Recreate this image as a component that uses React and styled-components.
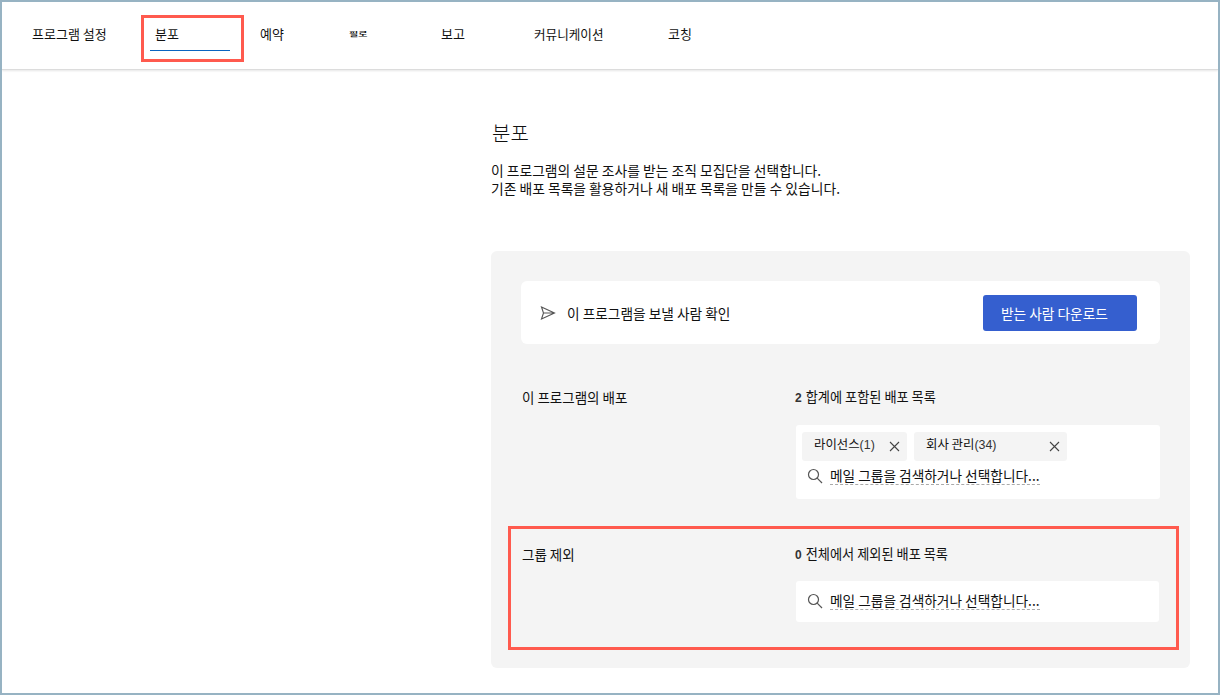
import React from "react";
import styled, { createGlobalStyle } from "styled-components";

const GlobalStyle = createGlobalStyle`
  html, body {
    margin: 0;
    padding: 0;
    background: #fff;
  }
  body {
    font-family: "Noto Sans CJK KR", "Liberation Sans", sans-serif;
    color: #111;
  }
`;

const Frame = styled.div`
  box-sizing: border-box;
  width: 1220px;
  height: 695px;
  border: 2px solid #97b3c3;
  overflow: hidden;
  background: #fff;
`;

const Nav = styled.nav`
  display: flex;
  align-items: flex-start;
  box-sizing: border-box;
  height: 68px;
  padding: 13px 0 0 30px;
  border-bottom: 1px solid #dcdcdc;
  box-shadow: 0 1px 2px rgba(0, 0, 0, 0.1);
`;

const NavText = styled.div`
  flex: none;
  width: ${(p) => (p.$width ? `${p.$width}px` : "auto")};
  height: 24px;
  margin-top: 7px;
  line-height: 24px;
  font-size: ${(p) => p.$size || 13}px;
  white-space: nowrap;
`;

const SmallNavText = styled(NavText)`
  font-size: 10px;
  font-weight: 700;
  span {
    display: inline-block;
    transform: scaleY(0.55);
  }
`;

const ActiveTab = styled.div`
  box-sizing: border-box;
  flex: none;
  width: 103px;
  height: 47px;
  margin-right: 16px;
  padding: 8px 11px 0 6px;
  border: 3px solid #ff5a4e;
`;

const ActiveLabel = styled.div`
  box-sizing: border-box;
  height: 25px;
  line-height: 16px;
  padding-left: 5px;
  font-size: 13px;
  border-bottom: 1px solid #0a64c0;
`;

const Main = styled.main`
  box-sizing: border-box;
  width: 699px;
  margin-left: 489px;
  padding-top: 49px;
`;

const Title = styled.h1`
  margin: 0 0 14px 1px;
  font-size: 20px;
  font-weight: 300;
  line-height: 28px;
`;

const Description = styled.p`
  margin: 0 0 54px;
  font-size: 13.8px;
  line-height: 18px;
`;

const Panel = styled.section`
  box-sizing: border-box;
  height: 417px;
  padding: 30px 30px 0;
  background: #f4f4f4;
  border-radius: 6px;
`;

const ConfirmCard = styled.div`
  display: flex;
  align-items: center;
  justify-content: space-between;
  box-sizing: border-box;
  height: 63px;
  padding: 0 23px 0 19px;
  background: #fff;
  border-radius: 6px;
  font-size: 13.7px;
`;

const ConfirmText = styled.div`
  display: flex;
  align-items: center;
  gap: 11px;
`;

const PrimaryButton = styled.button`
  box-sizing: border-box;
  width: 154px;
  height: 36px;
  padding: 0 0 0 18px;
  border: 0;
  border-radius: 3px;
  background: #355fcf;
  color: #fff;
  font-family: inherit;
  font-size: 13.7px;
  text-align: left;
`;

const Row = styled.div`
  display: grid;
  grid-template-columns: 274px 1fr;
  padding-top: 43px;
`;

const ExcludeRow = styled.div`
  display: grid;
  grid-template-columns: 274px 1fr;
  box-sizing: border-box;
  width: 671px;
  height: 124px;
  margin: 27px 0 0 -13px;
  padding: 15px 17px 0 10px;
  border: 3px solid #ff5a4e;
`;

const RowLabel = styled.div`
  padding-left: 1px;
  font-size: 13.5px;
  line-height: 20px;
`;

const CountLine = styled.div`
  margin-bottom: ${(p) => p.$gap}px;
  font-size: 13.2px;
  line-height: 20px;
`;

const Count = styled.span`
  color: #333;
  font-family: "Liberation Sans", sans-serif;
  font-weight: 700;
  font-size: 12px;
  margin-right: 4px;
`;

const InputBox = styled.div`
  box-sizing: border-box;
  margin-left: 1px;
  height: ${(p) => p.$height}px;
  padding: ${(p) => p.$padding};
  background: #fff;
  border-radius: 3px;
`;

const TagList = styled.div`
  display: flex;
  gap: 7px;
  margin-bottom: 5px;
`;

const Tag = styled.div`
  display: flex;
  align-items: center;
  justify-content: space-between;
  box-sizing: border-box;
  width: ${(p) => p.$width}px;
  height: 29px;
  padding: 0 7px 6px 12px;
  background: #f4f4f4;
  border-radius: 3px;
  font-size: 12.4px;
`;

const TagClose = styled.span`
  display: flex;
  margin-top: 6px;
`;

const TagCount = styled.span`
  font-family: "Liberation Sans", sans-serif;
  color: #333;
`;

const SearchRow = styled.div`
  display: flex;
  align-items: center;
  gap: 7px;
  padding-left: 5px;
`;

const Placeholder = styled.span`
  font-size: 13.7px;
  line-height: 18px;
  border-bottom: 1px dashed #aaa;
  white-space: nowrap;
`;

const SendIcon = () => (
  <svg width="16" height="16" viewBox="0 0 16 16" fill="none" stroke="#555" strokeWidth="1.1">
    <path d="M1.5 2 14.5 8 1.5 14 3.5 8Z M3.5 8H14.5" />
  </svg>
);

const SearchIcon = () => (
  <svg width="16" height="16" viewBox="0 0 16 16" fill="none" stroke="#555" strokeWidth="1.2">
    <circle cx="6.5" cy="6.5" r="5" />
    <path d="M10.2 10.2 15 15" />
  </svg>
);

const CloseIcon = () => (
  <svg width="11" height="11" viewBox="0 0 11 11" fill="none" stroke="#444" strokeWidth="1.1">
    <path d="M1 1 10 10M10 1 1 10" />
  </svg>
);

const SearchField = () => (
  <SearchRow>
    <SearchIcon />
    <Placeholder>메일 그룹을 검색하거나 선택합니다...</Placeholder>
  </SearchRow>
);

export default function App() {
  return (
    <Frame>
      <GlobalStyle />
      <Nav>
        <NavText $width={109}>프로그램 설정</NavText>
        <ActiveTab>
          <ActiveLabel>분포</ActiveLabel>
        </ActiveTab>
        <NavText $width={89}>예약</NavText>
        <SmallNavText $width={92}>
          <span>필로</span>
        </SmallNavText>
        <NavText $width={93}>보고</NavText>
        <NavText $width={134} $size={12.6}>
          커뮤니케이션
        </NavText>
        <NavText>코칭</NavText>
      </Nav>
      <Main>
        <Title>분포</Title>
        <Description>
          이 프로그램의 설문 조사를 받는 조직 모집단을 선택합니다.
          <br />
          기존 배포 목록을 활용하거나 새 배포 목록을 만들 수 있습니다.
        </Description>
        <Panel>
          <ConfirmCard>
            <ConfirmText>
              <SendIcon />이 프로그램을 보낼 사람 확인
            </ConfirmText>
            <PrimaryButton>받는 사람 다운로드</PrimaryButton>
          </ConfirmCard>
          <Row>
            <RowLabel>이 프로그램의 배포</RowLabel>
            <div>
              <CountLine $gap={17}>
                <Count>2</Count>합계에 포함된 배포 목록
              </CountLine>
              <InputBox $height={74} $padding="7px 6px">
                <TagList>
                  <Tag $width={105}>
                    <span>
                      라이선스<TagCount>(1)</TagCount>
                    </span>
                    <TagClose>
                      <CloseIcon />
                    </TagClose>
                  </Tag>
                  <Tag $width={153}>
                    <span>
                      회사 관리<TagCount>(34)</TagCount>
                    </span>
                    <TagClose>
                      <CloseIcon />
                    </TagClose>
                  </Tag>
                </TagList>
                <SearchField />
              </InputBox>
            </div>
          </Row>
          <ExcludeRow>
            <RowLabel>그룹 제외</RowLabel>
            <div>
              <CountLine $gap={16}>
                <Count>0</Count>전체에서 제외된 배포 목록
              </CountLine>
              <InputBox $height={41} $padding="10px 6px">
                <SearchField />
              </InputBox>
            </div>
          </ExcludeRow>
        </Panel>
      </Main>
    </Frame>
  );
}
